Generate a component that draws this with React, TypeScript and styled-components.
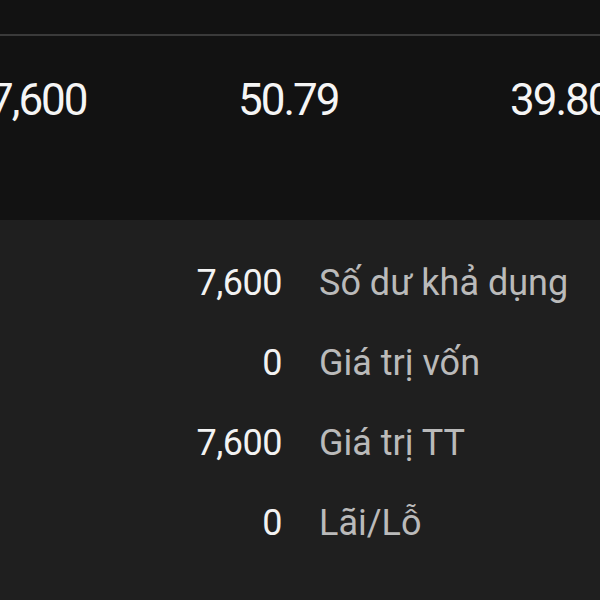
import styled, { createGlobalStyle } from "styled-components";

const summary = ["7,600", "50.79", "39.80"];

const rows = [
  { value: "7,600", label: "Số dư khả dụng" },
  { value: "0", label: "Giá trị vốn" },
  { value: "7,600", label: "Giá trị TT" },
  { value: "0", label: "Lãi/Lỗ" },
];

const App = () => {
  return (
    <>
      <GlobalStyle />
      <Page>
        <TopPanel>
          <Divider />
          <SummaryRow>
            {summary.map((v, i) => (
              <SummaryValue key={i}>{v}</SummaryValue>
            ))}
          </SummaryRow>
        </TopPanel>
        <DetailPanel>
          {rows.map((row, i) => (
            <DetailRow key={i}>
              <Value>{row.value}</Value>
              <Label>{row.label}</Label>
            </DetailRow>
          ))}
        </DetailPanel>
      </Page>
    </>
  );
};

export default App;

const GlobalStyle = createGlobalStyle`
  html, body {
    margin: 0;
    padding: 0;
    background: #1f1f1f;
    font-family: Roboto, "Noto Sans", sans-serif;
  }
`;

const Page = styled.div`
  width: 600px;
  height: 600px;
  overflow: hidden;
  display: flex;
  flex-direction: column;
`;

const TopPanel = styled.div`
  height: 220px;
  background: #121212;
  padding-top: 34px;
  box-sizing: border-box;
  display: flex;
  flex-direction: column;
`;

const Divider = styled.div`
  height: 2px;
  background: #3a3a3a;
`;

/* the summary strip is wider than the viewport, its outer values run past both edges */
const SummaryRow = styled.div`
  display: grid;
  grid-template-columns: 249px 272px 1fr;
  margin-left: -11px;
  margin-top: 38px;
`;

const SummaryValue = styled.div`
  color: #f5f5f5;
  font-size: 44px;
  letter-spacing: -2px;
  line-height: 52px;
  white-space: nowrap;
`;

const DetailPanel = styled.div`
  flex: 1;
  background: #1f1f1f;
  padding-top: 39px;
  display: flex;
  flex-direction: column;
  gap: 32px;
`;

const DetailRow = styled.div`
  display: grid;
  grid-template-columns: 282px 1fr;
  column-gap: 37px;
  align-items: center;
  height: 48px;
  font-size: 36px;
  line-height: 48px;
`;

const Value = styled.div`
  text-align: right;
  color: #f2f2f2;
  letter-spacing: -0.5px;
`;

const Label = styled.div`
  color: #bababa;
  white-space: nowrap;
`;
